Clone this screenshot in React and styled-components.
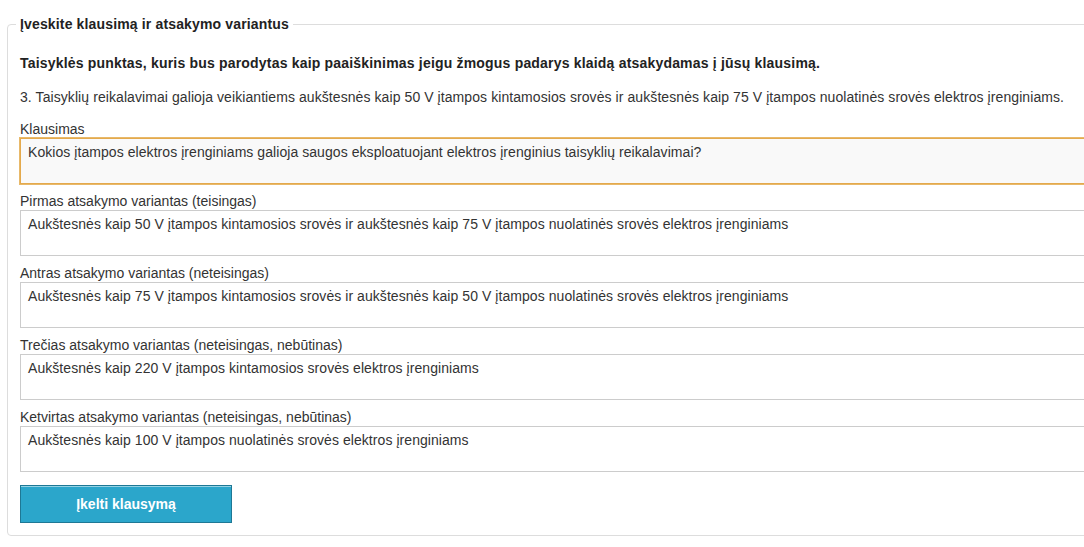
import React from 'react';
import styled, { createGlobalStyle } from 'styled-components';

const GlobalStyle = createGlobalStyle`
    html, body {
        margin: 0;
        padding: 0;
        background: #ffffff;
        overflow: hidden;
    }
    body {
        font-family: 'Liberation Sans', Arial, sans-serif;
        color: #333333;
    }
`;

const answers = [
    {
        label: 'Pirmas atsakymo variantas (teisingas)',
        value: 'Aukštesnės kaip 50 V įtampos kintamosios srovės ir aukštesnės kaip 75 V įtampos nuolatinės srovės elektros įrenginiams'
    },
    {
        label: 'Antras atsakymo variantas (neteisingas)',
        value: 'Aukštesnės kaip 75 V įtampos kintamosios srovės ir aukštesnės kaip 50 V įtampos nuolatinės srovės elektros įrenginiams'
    },
    {
        label: 'Trečias atsakymo variantas (neteisingas, nebūtinas)',
        value: 'Aukštesnės kaip 220 V įtampos kintamosios srovės elektros įrenginiams'
    },
    {
        label: 'Ketvirtas atsakymo variantas (neteisingas, nebūtinas)',
        value: 'Aukštesnės kaip 100 V įtampos nuolatinės srovės elektros įrenginiams'
    }
];

export default function App() {
    return (
        <>
            <GlobalStyle />
            <Page>
                <Fieldset>
                    <Legend>Įveskite klausimą ir atsakymo variantus</Legend>
                    <RuleTitle>
                        Taisyklės punktas, kuris bus parodytas kaip paaiškinimas jeigu žmogus padarys klaidą atsakydamas į jūsų klausimą.
                    </RuleTitle>
                    <RuleText>
                        3. Taisyklių reikalavimai galioja veikiantiems aukštesnės kaip 50 V įtampos kintamosios srovės ir aukštesnės kaip 75 V įtampos nuolatinės srovės elektros įrenginiams.
                    </RuleText>

                    <Fields>
                        <Field>
                            <Label>Klausimas</Label>
                            <Area
                                focused
                                defaultValue="Kokios įtampos elektros įrenginiams galioja saugos eksploatuojant elektros įrenginius taisyklių reikalavimai?"
                            />
                        </Field>

                        {answers.map((answer, index) => (
                            <Field key={index}>
                                <Label>{answer.label}</Label>
                                <Area defaultValue={answer.value} />
                            </Field>
                        ))}
                    </Fields>

                    <Submit type="button">Įkelti klausymą</Submit>
                </Fieldset>
            </Page>
        </>
    );
}

const Page = styled.div`
    padding: 15px 0 0 7px;
    width: 1120px;
`;

const Fieldset = styled.fieldset`
    margin: 0;
    padding: 0 12px 12px 12px;
    border: 1px solid #dddddd;
    border-radius: 4px;
    min-width: 0;
`;

const Legend = styled.legend`
    margin-left: -4px;
    padding: 0 4px;
    font-size: 14px;
    font-weight: 700;
    line-height: 18px;
    letter-spacing: 0.15px;
    color: #222222;
`;

const RuleTitle = styled.p`
    margin: 20px 0 0;
    font-size: 14px;
    font-weight: 700;
    line-height: 20px;
    letter-spacing: 0.19px;
    color: #222222;
`;

const RuleText = styled.p`
    margin: 14px 0 0;
    font-size: 14px;
    line-height: 20px;
    letter-spacing: 0.08px;
    color: #333333;
`;

const Fields = styled.div`
    display: flex;
    flex-direction: column;
    gap: 8px;
    margin-top: 13px;
`;

const Field = styled.div`
    display: flex;
    flex-direction: column;
`;

const Label = styled.label`
    font-size: 14px;
    line-height: 18px;
    color: #333333;
`;

const Area = styled.textarea`
    display: block;
    box-sizing: border-box;
    width: 100%;
    height: 46px;
    margin: 0;
    padding: 3px 7px;
    resize: none;
    font-family: 'Liberation Sans', Arial, sans-serif;
    font-size: 14px;
    line-height: 20px;
    letter-spacing: 0.06px;
    color: #333333;
    background: ${props => props.focused ? '#f9f9f9' : '#ffffff'};
    border: 1px solid ${props => props.focused ? '#e4a94c' : '#cccccc'};
    box-shadow: ${props => props.focused ? '0 0 0 1px #e8b96a' : 'none'};
    border-radius: 0;
    outline: none;
`;

const Submit = styled.button`
    display: block;
    margin-top: 13px;
    width: 212px;
    height: 38px;
    background: #2ba6cb;
    border: 1px solid #1e7895;
    box-shadow: inset 0 1px 0 rgba(255, 255, 255, 0.5);
    color: #ffffff;
    font-family: 'Liberation Sans', Arial, sans-serif;
    font-size: 14px;
    font-weight: 700;
    cursor: pointer;
`;
